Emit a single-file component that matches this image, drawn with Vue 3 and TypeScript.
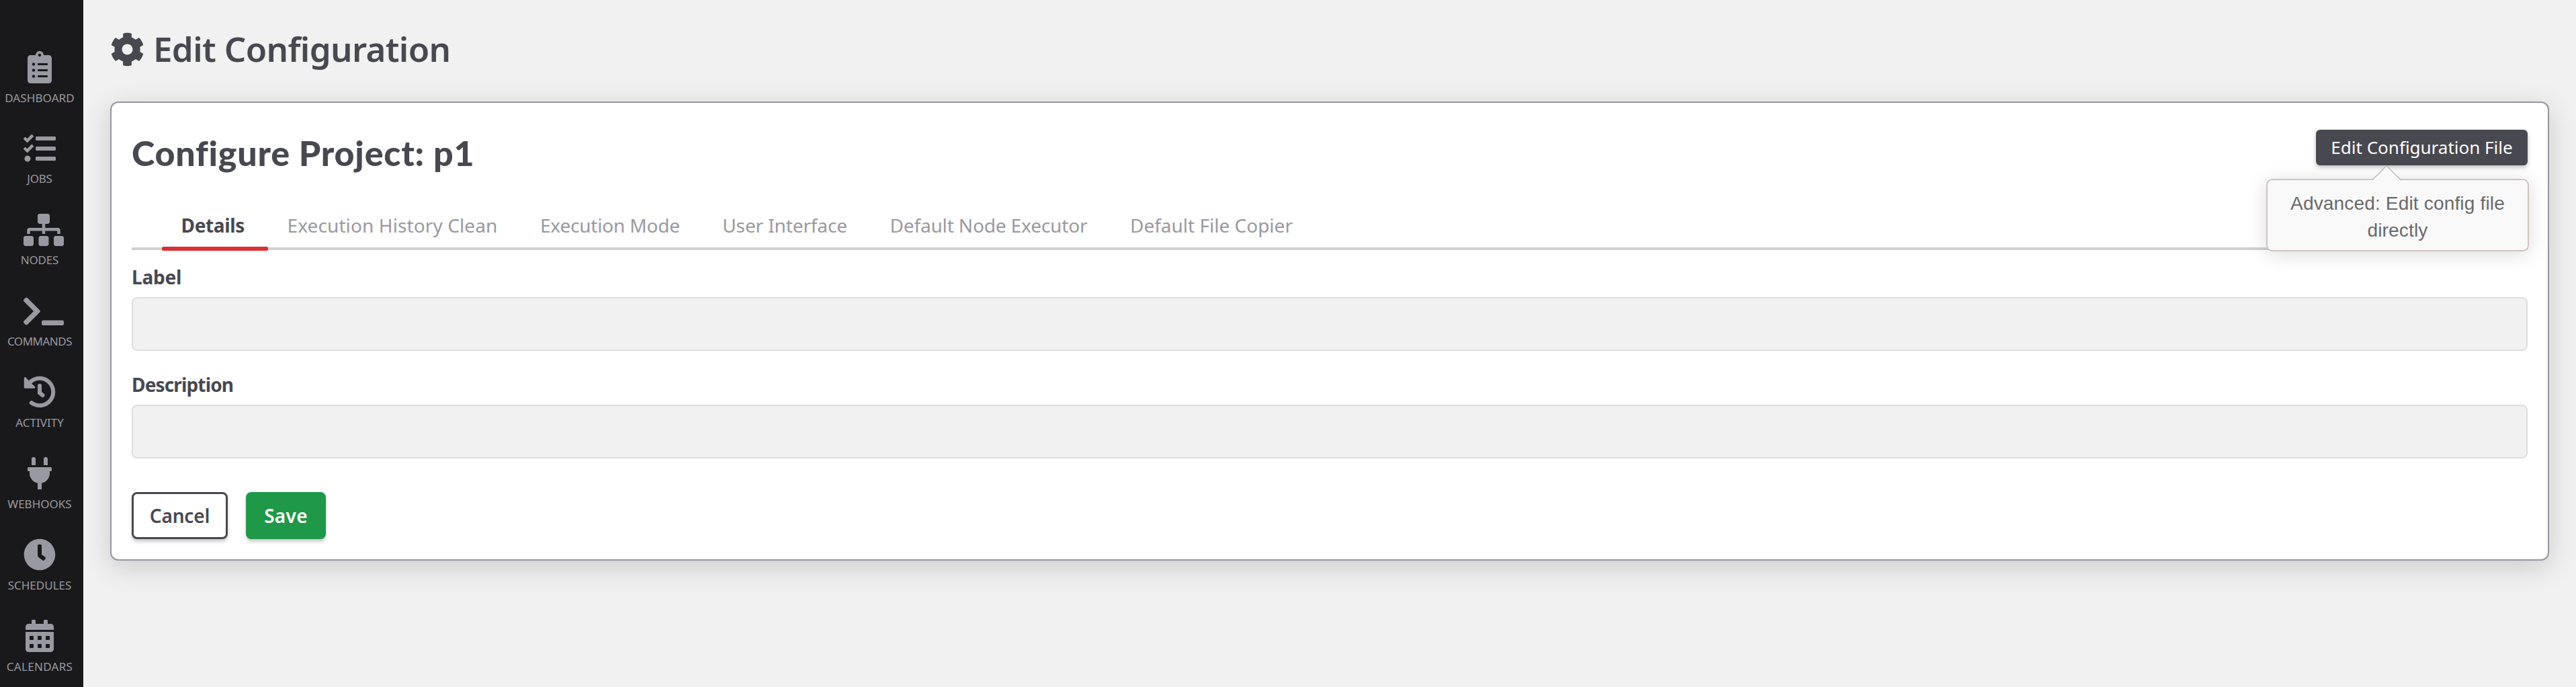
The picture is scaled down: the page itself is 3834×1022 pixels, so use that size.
<script setup lang="ts">
import { ref } from 'vue'

interface NavItem {
  label: string
  width: number
  spacing: number
  path: string
}

interface Tab {
  label: string
  spacing: number
}

const nav: NavItem[] = [
  {
    label: 'Dashboard', width: 384, spacing: 0.1,
    path: 'M336 64h-80c0-35.3-28.7-64-64-64s-64 28.7-64 64H48C21.5 64 0 85.5 0 112v352c0 26.5 21.5 48 48 48h288c26.5 0 48-21.5 48-48V112c0-26.5-21.5-48-48-48zM96 424c-13.3 0-24-10.7-24-24s10.7-24 24-24 24 10.7 24 24-10.7 24-24 24zm0-96c-13.3 0-24-10.7-24-24s10.7-24 24-24 24 10.7 24 24-10.7 24-24 24zm0-96c-13.3 0-24-10.7-24-24s10.7-24 24-24 24 10.7 24 24-10.7 24-24 24zm96-192c13.3 0 24 10.7 24 24s-10.7 24-24 24-24-10.7-24-24 10.7-24 24-24zm128 368c0 4.4-3.6 8-8 8H168c-4.4 0-8-3.6-8-8v-16c0-4.4 3.6-8 8-8h144c4.4 0 8 3.6 8 8v16zm0-96c0 4.4-3.6 8-8 8H168c-4.4 0-8-3.6-8-8v-16c0-4.4 3.6-8 8-8h144c4.4 0 8 3.6 8 8v16zm0-96c0 4.4-3.6 8-8 8H168c-4.4 0-8-3.6-8-8v-16c0-4.4 3.6-8 8-8h144c4.4 0 8 3.6 8 8v16z',
  },
  {
    label: 'Jobs', width: 512, spacing: -0.2,
    path: 'M139.61 35.5a12 12 0 0 0-17 0L58.93 98.81l-22.7-22.12a12 12 0 0 0-17 0L3.53 92.41a12 12 0 0 0 0 17l47.59 47.4a12.78 12.78 0 0 0 17.61 0l15.59-15.62L156.52 69a12.09 12.09 0 0 0 .09-17zm0 159.19a12 12 0 0 0-17 0l-63.68 63.72-22.7-22.1a12 12 0 0 0-17 0L3.53 252a12 12 0 0 0 0 17L51 316.5a12.77 12.77 0 0 0 17.6 0l15.7-15.69 72.2-72.22a12 12 0 0 0 .09-16.9zM64 368c-26.49 0-48.59 21.5-48.59 48S37.53 464 64 464a48 48 0 0 0 0-96zm432 16H208a16 16 0 0 0-16 16v32a16 16 0 0 0 16 16h288a16 16 0 0 0 16-16v-32a16 16 0 0 0-16-16zm0-320H208a16 16 0 0 0-16 16v32a16 16 0 0 0 16 16h288a16 16 0 0 0 16-16V80a16 16 0 0 0-16-16zm0 160H208a16 16 0 0 0-16 16v32a16 16 0 0 0 16 16h288a16 16 0 0 0 16-16v-32a16 16 0 0 0-16-16z',
  },
  {
    label: 'Nodes', width: 640, spacing: -0.2,
    path: 'M128 352H32c-17.67 0-32 14.33-32 32v96c0 17.67 14.33 32 32 32h96c17.67 0 32-14.33 32-32v-96c0-17.67-14.33-32-32-32zm-24-80h192v48h48v-48h192v48h48v-57.59c0-21.17-17.23-38.41-38.41-38.41H344v-64h40c17.67 0 32-14.33 32-32V32c0-17.67-14.33-32-32-32H256c-17.67 0-32 14.33-32 32v96c0 17.67 14.33 32 32 32h40v64H94.41C73.23 224 56 241.23 56 262.41V320h48v-48zm264 80h-96c-17.67 0-32 14.33-32 32v96c0 17.67 14.33 32 32 32h96c17.67 0 32-14.33 32-32v-96c0-17.67-14.33-32-32-32zm240 0h-96c-17.67 0-32 14.33-32 32v96c0 17.67 14.33 32 32 32h96c17.67 0 32-14.33 32-32v-96c0-17.67-14.33-32-32-32z',
  },
  {
    label: 'Commands', width: 640, spacing: -0.5,
    path: 'M257.981 272.971L63.638 467.314c-9.373 9.373-24.569 9.373-33.941 0L7.029 444.647c-9.357-9.357-9.375-24.522-.04-33.901L161.011 256 6.99 101.255c-9.335-9.379-9.317-24.544.04-33.901l22.667-22.667c9.373-9.373 24.569-9.373 33.941 0L257.981 239.03c9.373 9.372 9.373 24.568 0 33.941zM640 456v-32c0-13.255-10.745-24-24-24H312c-13.255 0-24 10.745-24 24v32c0 13.255 10.745 24 24 24h304c13.255 0 24-10.745 24-24z',
  },
  {
    label: 'Activity', width: 512, spacing: 0,
    path: 'M504 255.531c.253 136.64-111.18 248.372-247.82 248.468-59.015.042-113.223-20.53-155.822-54.911-11.077-8.94-11.905-25.541-1.839-35.607l11.267-11.267c8.609-8.609 22.353-9.551 31.891-1.984C173.062 425.135 212.781 440 256 440c101.705 0 184-82.311 184-184 0-101.705-82.311-184-184-184-48.814 0-93.149 18.969-126.068 49.932l50.754 50.754c10.08 10.08 2.941 27.314-11.313 27.314H24c-8.837 0-16-7.163-16-16V38.627c0-14.254 17.234-21.393 27.314-11.314l49.372 49.372C129.209 34.136 189.552 8 256 8c136.81 0 247.747 110.78 248 247.531zm-180.912 78.784l9.823-12.63c8.138-10.463 6.253-25.542-4.21-33.679L288 256.349V152c0-13.255-10.745-24-24-24h-16c-13.255 0-24 10.745-24 24v135.651l65.409 50.874c10.463 8.137 25.541 6.253 33.679-4.21z',
  },
  {
    label: 'Webhooks', width: 384, spacing: 0,
    path: 'M320,32a32,32,0,0,0-64,0v96h64Zm48,128H16A16,16,0,0,0,0,176v32a16,16,0,0,0,16,16H32v32A160.07,160.07,0,0,0,160,412.8V512h64V412.8A160.07,160.07,0,0,0,352,256V224h16a16,16,0,0,0,16-16V176A16,16,0,0,0,368,160ZM128,32a32,32,0,0,0-64,0v96h64Z',
  },
  {
    label: 'Schedules', width: 512, spacing: 0,
    path: 'M256,8C119,8,8,119,8,256S119,504,256,504,504,393,504,256,393,8,256,8Zm92.49,313h0l-20,25a16,16,0,0,1-22.49,2.5h0l-67-49.72a40,40,0,0,1-15-31.23V112a16,16,0,0,1,16-16h32a16,16,0,0,1,16,16V256l58,42.5A16,16,0,0,1,348.49,321Z',
  },
  {
    label: 'Calendars', width: 448, spacing: 0.3,
    path: 'M0 464c0 26.5 21.5 48 48 48h352c26.5 0 48-21.5 48-48V192H0v272zm320-196c0-6.6 5.4-12 12-12h40c6.6 0 12 5.4 12 12v40c0 6.6-5.4 12-12 12h-40c-6.6 0-12-5.4-12-12v-40zm0 128c0-6.6 5.4-12 12-12h40c6.6 0 12 5.4 12 12v40c0 6.6-5.4 12-12 12h-40c-6.6 0-12-5.4-12-12v-40zM192 268c0-6.6 5.4-12 12-12h40c6.6 0 12 5.4 12 12v40c0 6.6-5.4 12-12 12h-40c-6.6 0-12-5.4-12-12v-40zm0 128c0-6.6 5.4-12 12-12h40c6.6 0 12 5.4 12 12v40c0 6.6-5.4 12-12 12h-40c-6.6 0-12-5.4-12-12v-40zM64 268c0-6.6 5.4-12 12-12h40c6.6 0 12 5.4 12 12v40c0 6.6-5.4 12-12 12H76c-6.6 0-12-5.4-12-12v-40zm0 128c0-6.6 5.4-12 12-12h40c6.6 0 12 5.4 12 12v40c0 6.6-5.4 12-12 12H76c-6.6 0-12-5.4-12-12v-40zM400 64h-48V16c0-8.8-7.2-16-16-16h-32c-8.8 0-16 7.2-16 16v48H160V16c0-8.8-7.2-16-16-16h-32c-8.8 0-16 7.2-16 16v48H48C21.5 64 0 85.5 0 112v48h448v-48c0-26.5-21.5-48-48-48z',
  },
]

const tabs: Tab[] = [
  { label: 'Details', spacing: -0.35 },
  { label: 'Execution History Clean', spacing: 0.11 },
  { label: 'Execution Mode', spacing: -0.2 },
  { label: 'User Interface', spacing: -0.12 },
  { label: 'Default Node Executor', spacing: -0.14 },
  { label: 'Default File Copier', spacing: 0 },
]

const activeTab = ref('Details')
const label = ref('')
const description = ref('')
</script>

<template>
  <div class="app">
    <nav class="sidebar">
      <a v-for="item in nav" :key="item.label" class="nav-item">
        <span class="nav-icon" :class="{ wide: item.width > 512 }">
          <svg :viewBox="`0 0 ${item.width} 512`" height="48" :width="(item.width * 48) / 512">
            <path :d="item.path" fill="currentColor" />
          </svg>
        </span>
        <span class="nav-label" :style="{ letterSpacing: item.spacing + 'px' }">{{ item.label }}</span>
      </a>
    </nav>

    <main class="content">
      <h1 class="page-title">
        <svg class="gear" viewBox="0 0 512 512" width="51" height="51">
          <path fill="currentColor" d="M487.4 315.7l-42.6-24.6c4.3-23.2 4.3-47 0-70.2l42.6-24.6c4.9-2.8 7.1-8.6 5.5-14-11.1-35.6-30-67.8-54.7-94.6-3.8-4.1-10-5.1-14.8-2.3L380.8 110c-17.9-15.4-38.5-27.3-60.8-35.1V25.8c0-5.6-3.9-10.5-9.4-11.7-36.7-8.2-74.3-7.8-109.2 0-5.5 1.2-9.4 6.1-9.4 11.7V75c-22.2 7.9-42.8 19.8-60.8 35.1L88.7 85.5c-4.9-2.8-11-1.9-14.8 2.3-24.7 26.7-43.6 58.9-54.7 94.6-1.7 5.4.6 11.2 5.5 14L67.3 221c-4.3 23.2-4.3 47 0 70.2l-42.6 24.6c-4.9 2.8-7.1 8.6-5.5 14 11.1 35.6 30 67.8 54.7 94.6 3.8 4.1 10 5.1 14.8 2.3l42.6-24.6c17.9 15.4 38.5 27.3 60.8 35.1v49.2c0 5.6 3.9 10.5 9.4 11.7 36.7 8.2 74.3 7.8 109.2 0 5.5-1.2 9.4-6.1 9.4-11.7v-49.2c22.2-7.9 42.8-19.8 60.8-35.1l42.6 24.6c4.9 2.8 11 1.9 14.8-2.3 24.7-26.7 43.6-58.9 54.7-94.6 1.5-5.5-.7-11.3-5.6-14.1zM256 336c-44.1 0-80-35.9-80-80s35.9-80 80-80 80 35.9 80 80-35.9 80-80 80z" />
        </svg>
        <span>Edit Configuration</span>
      </h1>

      <section class="card">
        <header class="card-head">
          <h2 class="card-title">Configure Project: p1</h2>
          <div class="edit-wrap">
            <button class="btn-dark" type="button">Edit Configuration File</button>
            <div class="tooltip" role="tooltip">
              Advanced: Edit config file directly
              <svg class="arrow" viewBox="0 0 44 23" width="44" height="23">
                <path d="M1 22.500L22 1.500L43 22.500Z" fill="#f9f9f9" />
                <path d="M1 21.500L22 0.900L43 21.500" fill="none" stroke="#b9b6b6" stroke-width="1.300" />
              </svg>
            </div>
          </div>
        </header>

        <div class="tabs">
          <a
            v-for="tab in tabs"
            :key="tab.label"
            class="tab"
            :class="{ active: tab.label === activeTab }"
            :style="{ letterSpacing: tab.spacing + 'px' }"
            @click="activeTab = tab.label"
          >{{ tab.label }}</a>
        </div>

        <form @submit.prevent>
          <div class="field">
            <label class="field-label label-short" for="project-label">Label</label>
            <input id="project-label" v-model="label" class="input" type="text" />
          </div>
          <div class="field">
            <label class="field-label label-long" for="project-description">Description</label>
            <input id="project-description" v-model="description" class="input" type="text" />
          </div>
          <div class="actions">
            <button class="btn btn-cancel" type="button">Cancel</button>
            <button class="btn btn-save" type="submit">Save</button>
          </div>
        </form>
      </section>
    </main>
  </div>
</template>

<style>
body {
  margin: 0;
  background: #f1f1f1;
}
</style>

<style scoped>
* {
  box-sizing: border-box;
}

.app {
  display: flex;
  height: 1022px;
  overflow: hidden;
  background: #f1f1f1;
  color: #484850;
  font-family: "Noto Sans", "Open Sans", sans-serif;
}

/* Sidebar */
.sidebar {
  flex: none;
  width: 124px;
  padding: 76px 6px 0 0;
  background: #19191b;
  overflow: hidden;
}

.nav-item {
  display: flex;
  flex-direction: column;
  align-items: center;
  height: 120.86px;
  color: #9999a1;
}

.nav-icon {
  display: flex;
  flex: none;
  justify-content: center;
  width: 48px;
  height: 48px;
}

.nav-icon.wide {
  justify-content: flex-start;
}

.nav-icon svg {
  flex: none;
}

.nav-label {
  margin-top: 11.500px;
  font-size: 17px;
  line-height: 20px;
  text-transform: uppercase;
  white-space: nowrap;
}

/* Page */
.content {
  flex: 1;
  min-width: 0;
  padding: 40px 40px 0 40px;
}

.page-title {
  display: flex;
  align-items: center;
  gap: 13px;
  margin: 0;
  font-size: 51px;
  font-weight: 600;
  line-height: 64px;
  letter-spacing: -0.600px;
}

.gear {
  position: relative;
  top: 1px;
}

.card {
  height: 683px;
  margin-top: 47px;
  padding: 40px 30px 0;
  border: 2px solid #95959f;
  border-radius: 12px;
  background: #fff;
  box-shadow: 0 10px 40px rgba(0, 0, 0, 0.16);
}

.card-head {
  display: flex;
  align-items: flex-start;
  justify-content: space-between;
  height: 122px;
}

.card-title {
  margin: 4px 0 0 0;
  font-family: Lato, sans-serif;
  font-size: 52px;
  font-weight: 900;
  line-height: 60px;
  letter-spacing: 0.750px;
}

.edit-wrap {
  position: relative;
}

.btn-dark {
  display: block;
  width: 315px;
  height: 53px;
  padding: 0;
  border: 0;
  border-radius: 6px;
  background: #484850;
  box-shadow: 0 3px 6px rgba(0, 0, 0, 0.25);
  color: #fff;
  font: 400 26px/53px "Noto Sans", sans-serif;
  white-space: nowrap;
}

.tooltip {
  position: absolute;
  top: 73px;
  right: -2px;
  z-index: 2;
  width: 391px;
  height: 108px;
  padding: 15px 30px;
  border: 2px solid #d0c3c2;
  border-radius: 9px;
  background: #f9f9f9;
  box-shadow: 0 4px 30px rgba(0, 0, 0, 0.14);
  color: #696969;
  font: 400 28px/40px "Liberation Sans", Arial, sans-serif;
  letter-spacing: 0.170px;
  text-align: center;
}

.arrow {
  position: absolute;
  top: -22px;
  left: 155px;
}

/* Tabs */
.tabs {
  display: flex;
  height: 57px;
  padding-left: 45px;
  border-bottom: 4px solid #cfcfcf;
}

.tab {
  position: relative;
  padding: 0 35px 0 28.500px;
  color: #9999a1;
  font-size: 28px;
  line-height: 40px;
  white-space: nowrap;
}

.tab.active {
  color: #484850;
  font-weight: 700;
}

.tab.active::after {
  content: "";
  position: absolute;
  right: 0;
  bottom: -5px;
  left: 0;
  height: 6px;
  border-radius: 2px;
  background: #db2f32;
}

/* Form */
.field {
  margin-top: 21px;
}

.field + .field {
  margin-top: 31px;
}

.field-label {
  display: block;
  font-size: 28px;
  font-weight: 700;
  line-height: 38px;
}

.label-short {
  letter-spacing: -0.200px;
}

.label-long {
  letter-spacing: -0.850px;
}

.input {
  display: block;
  width: 100%;
  height: 80px;
  margin-top: 11px;
  padding: 0 20px;
  border: 2px solid #dededf;
  border-radius: 8px;
  background: #f1f1f1;
  font-size: 28px;
}

.actions {
  display: flex;
  gap: 27px;
  margin-top: 50px;
}

.btn {
  height: 70px;
  padding: 0;
  border-radius: 8px;
  box-shadow: 0 4px 5px rgba(0, 0, 0, 0.2);
  font: 600 28px/64px "Noto Sans", sans-serif;
}

.btn-cancel {
  width: 143px;
  border: 3px solid #484850;
  background: #fff;
  color: #484850;
  letter-spacing: -0.200px;
}

.btn-save {
  width: 119px;
  border: 3px solid #1f9849;
  background: #1f9849;
  color: #fff;
  letter-spacing: 0.300px;
}
</style>
